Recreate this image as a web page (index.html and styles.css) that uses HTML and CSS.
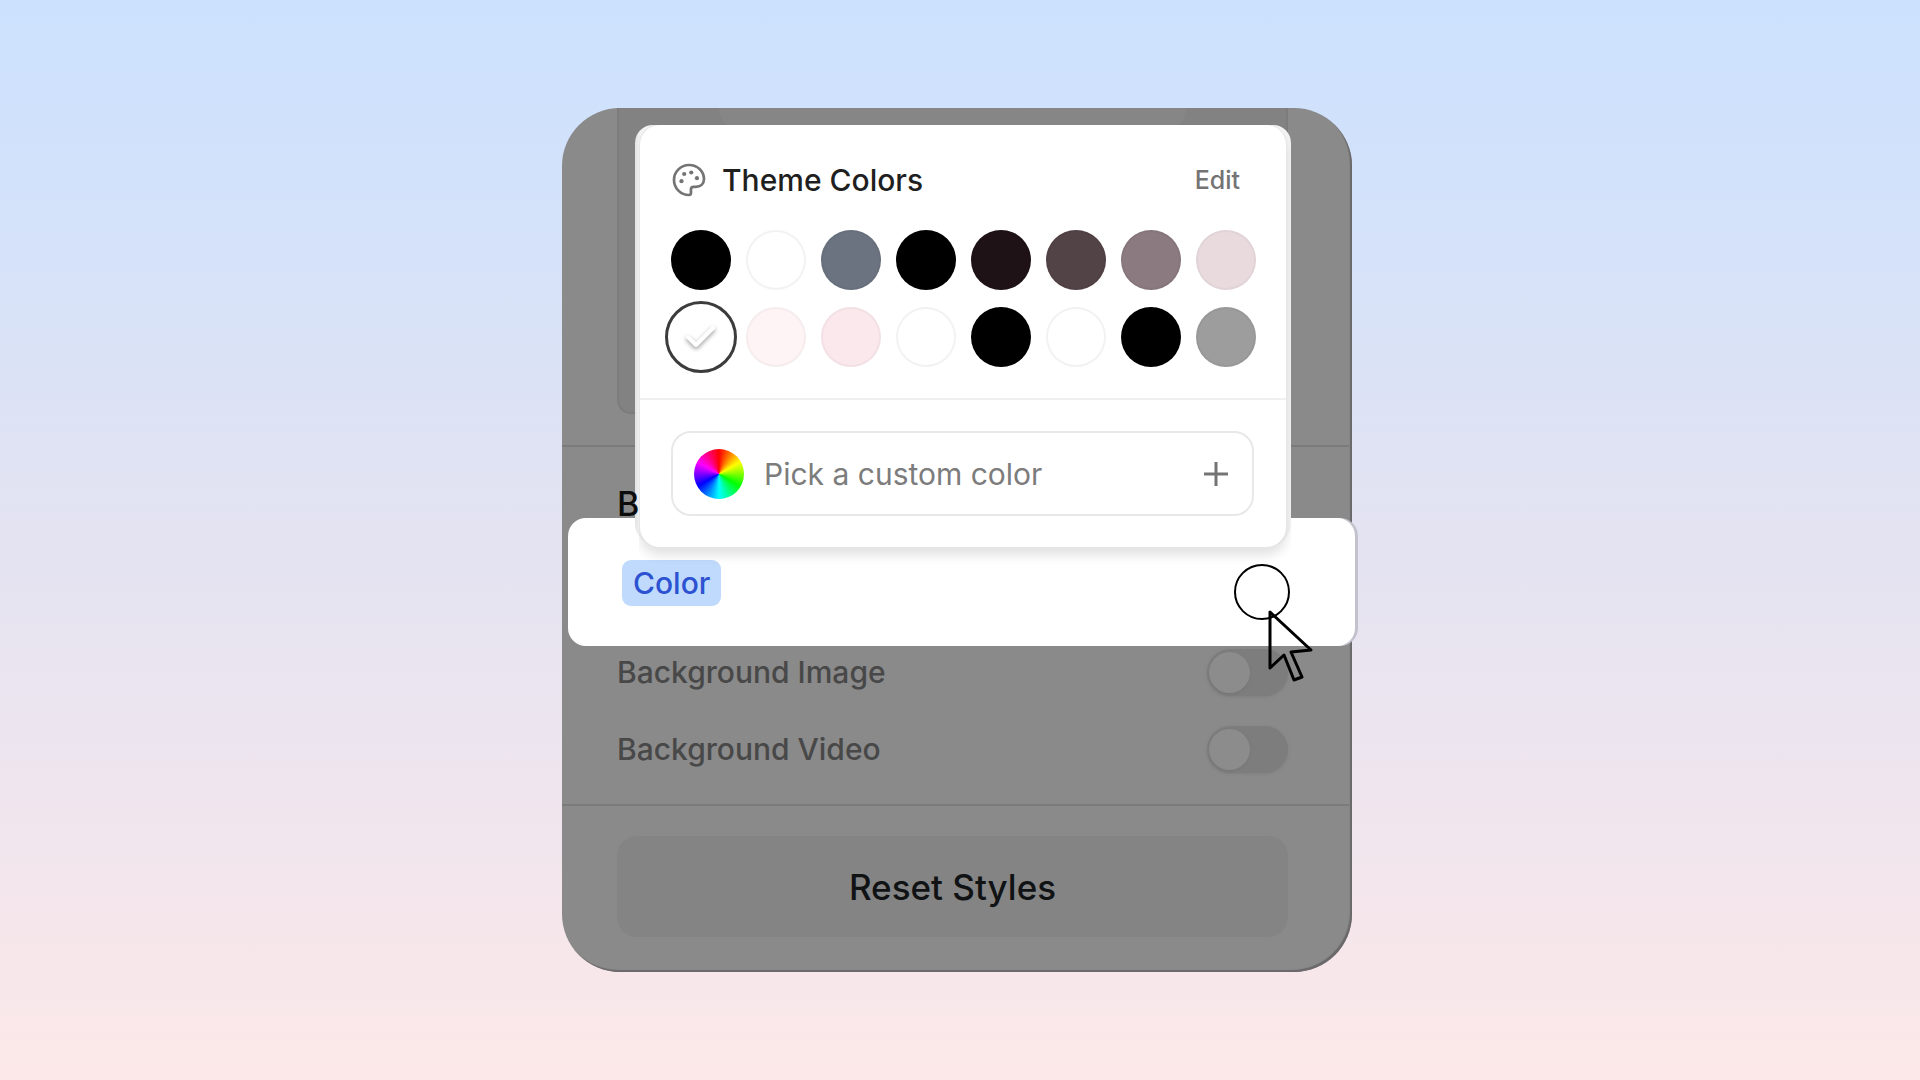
FILE: index.html
```html
<!DOCTYPE html>
<html lang="en">
<head>
    <meta charset="UTF-8">
    <meta name="viewport" content="width=device-width, initial-scale=1">
    <title>Theme Colors</title>
    <link rel="stylesheet" href="styles.css">
</head>
<body>
    <main class="panel">
        <div class="preview">
            <div class="preview-shape"></div>
        </div>

        <section class="background">
            <h2>B</h2>

            <div class="color-row">
                <label class="color-label" for="bg-color">Color</label>
                <button class="color-dot" id="bg-color" type="button"></button>
                <svg class="cursor" viewBox="0 0 48 76" fill="none" stroke="#000" stroke-width="3" stroke-linejoin="round">
                    <path d="M3 3v56l14-13 10 25 8-3-11-25 20-2z"/>
                </svg>
            </div>

            <div class="options">
                <div class="option">
                    <label for="bg-image">Background Image</label>
                    <input class="toggle" type="checkbox" id="bg-image">
                </div>
                <div class="option">
                    <label for="bg-video">Background Video</label>
                    <input class="toggle" type="checkbox" id="bg-video">
                </div>
            </div>
        </section>

        <div class="footer">
            <button class="reset" type="button">Reset Styles</button>
        </div>

        <div class="spotlight">
            <div class="popup">
                <div class="theme">
                    <div class="theme-header">
                        <svg class="palette" viewBox="0 0 24 24" fill="none" stroke="#747474" stroke-width="1.8" stroke-linejoin="round">
                            <path d="M12 2C6.500 2 2 6.500 2 12s4.500 10 10 10c.8 0 1.300-.5 1.300-1.300v-2.400c0-1 .7-1.700 1.700-1.700h1.500c3.200 0 5.500-2 5.500-5.200C22 6 17.500 2 12 2z"/>
                            <g fill="#747474" stroke="none">
                                <circle cx="7" cy="12.800" r="1.400"/>
                                <circle cx="8.800" cy="8" r="1.400"/>
                                <circle cx="13.500" cy="7" r="1.400"/>
                                <circle cx="17.300" cy="10.800" r="1.400"/>
                            </g>
                        </svg>
                        <h3>Theme Colors</h3>
                        <button class="edit" type="button">Edit</button>
                    </div>
                    <div class="swatches">
                        <button class="swatch black" type="button" aria-label="Black"></button>
                        <button class="swatch white" type="button" aria-label="White"></button>
                        <button class="swatch slate" type="button" aria-label="Slate"></button>
                        <button class="swatch black" type="button" aria-label="Black"></button>
                        <button class="swatch plum" type="button" aria-label="Plum"></button>
                        <button class="swatch mauve-dark" type="button" aria-label="Dark mauve"></button>
                        <button class="swatch mauve" type="button" aria-label="Mauve"></button>
                        <button class="swatch blush" type="button" aria-label="Blush"></button>
                        <button class="swatch white selected" type="button" aria-label="White, selected">
                            <svg class="check" viewBox="0 0 36 36" fill="none" stroke="#fff" stroke-width="4" stroke-linecap="round" stroke-linejoin="round">
                                <path d="M5 18l8 8L30 9"/>
                            </svg>
                        </button>
                        <button class="swatch rose-light" type="button" aria-label="Light rose"></button>
                        <button class="swatch rose" type="button" aria-label="Rose"></button>
                        <button class="swatch white" type="button" aria-label="White"></button>
                        <button class="swatch black" type="button" aria-label="Black"></button>
                        <button class="swatch white" type="button" aria-label="White"></button>
                        <button class="swatch black" type="button" aria-label="Black"></button>
                        <button class="swatch gray" type="button" aria-label="Gray"></button>
                    </div>
                </div>
                <div class="custom">
                    <button class="picker" type="button">
                        <span class="wheel"></span>
                        <span class="picker-text">Pick a custom color</span>
                        <svg class="plus" viewBox="0 0 24 24" stroke="#747474" stroke-width="3">
                            <path d="M12 0v24M0 12h24"/>
                        </svg>
                    </button>
                </div>
            </div>
        </div>
    </main>
</body>
</html>
```
FILE: styles.css
```css
* {
    margin: 0;
    padding: 0;
    box-sizing: border-box;
}

body {
    font-family: Inter, "Liberation Sans", sans-serif;
    font-size: 30px;
    font-weight: 500;
    min-height: 100vh;
    display: flex;
    justify-content: center;
    align-items: center;
    padding-right: 6px;
    background: linear-gradient(#cce1fe 0%, #d5e2f9 23%, #e2e3f2 47%, #efe5ee 74%, #fce8e8 100%);
}

button {
    font: inherit;
    border: none;
    cursor: pointer;
}

/* panel */

.panel {
    position: relative;
    width: 100%;
    max-width: 790px;
    background: #8a8a8a;
    border-radius: 58px;
    box-shadow: inset -2px -2px 1px #6b686b;
}

.preview {
    height: 306px;
    margin: 0 64px 31px 55px;
    background: #828282;
    border: 2px solid #7c7c7c;
    border-top: none;
    border-radius: 0 0 14px 14px;
}

.preview-shape {
    width: 70%;
    height: 24px;
    margin: 0 auto;
    background: #868686;
    border-radius: 0 0 60px 60px;
}

.background {
    border-top: 2px solid #7b7b7b;
    border-bottom: 2px solid #7b7b7b;
    margin-right: 3px;
}

h2 {
    position: relative;
    z-index: 1;
    height: 71px;
    padding: 35px 0 0 55px;
    font-size: 34px;
    line-height: 44px;
    font-weight: 500;
    color: #0c0c0c;
}

.color-row {
    position: relative;
    display: flex;
    justify-content: space-between;
    align-items: center;
    height: 128px;
    margin: 0 -6px 0 6px;
    padding: 20px 65px 0 54px;
    background: #fff;
    border-radius: 18px;
    box-shadow: 3px 0 0 #c3c1cb;
}

.color-label {
    padding: 0 11px;
    margin-bottom: 18px;
    line-height: 46px;
    color: #2c52d2;
    background: #bfdafc;
    border-radius: 9px;
}

.color-dot {
    width: 56px;
    height: 56px;
    background: #fff;
    border: 2px solid #000;
    border-radius: 50%;
}

.cursor {
    position: absolute;
    right: 40px;
    top: 91px;
    width: 48px;
    height: 76px;
    z-index: 3;
}

.options {
    display: flex;
    flex-direction: column;
    gap: 30px;
    padding: 3px 61px 31px 55px;
}

.option {
    display: flex;
    justify-content: space-between;
    align-items: center;
    line-height: 47px;
    color: #484848;
}

.toggle {
    appearance: none;
    width: 81px;
    height: 47px;
    padding: 3px 2px;
    background: #7d7d7d;
    border-radius: 24px;
    box-shadow: 0 1px 3px #7f7f7f;
    cursor: pointer;
}

.toggle::before {
    content: "";
    display: block;
    width: 41px;
    height: 41px;
    border-radius: 50%;
    background: #8c8c8c;
    box-shadow: 0 1px 3px #757575;
}

.footer {
    padding: 30px 64px 35px 55px;
}

.reset {
    width: 100%;
    height: 101px;
    font-size: 35px;
    color: #101214;
    background: #848484;
    border-radius: 20px;
}

/* color popup, laid over the panel */

.spotlight {
    position: absolute;
    top: 17px;
    left: 73px;
    right: 61px;
    padding: 0 5px;
    background: linear-gradient(to right, #e2e2e2, #f4f4f4 5px, #f4f4f4);
    border-radius: 18px 18px 24px 24px;
}

.popup {
    position: relative;
    z-index: 2;
    background: #fff;
    border-radius: 20px;
    box-shadow: 0 0 0 1px #e6e6e6, 0 8px 12px rgba(0, 0, 0, 0.12);
    clip-path: inset(0 -5px -30px -1px);
}

.theme {
    padding: 34px 30px 31px 31px;
    border-bottom: 2px solid #f0f0f0;
}

.theme-header {
    display: flex;
    align-items: center;
    height: 42px;
    margin-bottom: 29px;
}

.palette {
    width: 36px;
    height: 36px;
    margin-right: 15px;
}

h3 {
    font-size: 30px;
    font-weight: 500;
    color: #1f1f1f;
}

.edit {
    margin: 0 16px 0 auto;
    font-size: 25px;
    color: #747474;
    background: none;
}

.swatches {
    display: grid;
    grid-template-columns: repeat(8, 60px);
    justify-content: space-between;
    row-gap: 17px;
}

.swatch {
    height: 60px;
    border: 2px solid rgba(0, 0, 0, 0.03);
    border-radius: 50%;
}

.selected {
    display: flex;
    justify-content: center;
    align-items: center;
    border-color: #fff;
    outline: 3px solid #3c3c3c;
    outline-offset: 3px;
}

.check {
    width: 36px;
    height: 36px;
    filter: drop-shadow(0 2px 2px rgba(0, 0, 0, 0.4));
}

.black { background-color: #000; }
.white { background-color: #fff; border-color: rgba(0, 0, 0, 0.05); }
.white.selected { border-color: #fff; }
.slate { background-color: #6b7280; }
.plum { background-color: #1f1216; }
.mauve-dark { background-color: #524347; }
.mauve { background-color: #8b7a80; }
.blush { background-color: #e9dade; }
.rose-light { background-color: #fef4f6; }
.rose { background-color: #fae8ed; }
.gray { background-color: #9d9d9d; }

.custom {
    padding: 31px 32px 31px 31px;
}

.picker {
    display: flex;
    align-items: center;
    width: 100%;
    height: 85px;
    padding: 0 24px 0 21px;
    background: #fff;
    border: 2px solid #e8e8e8;
    border-radius: 20px;
}

.wheel {
    width: 50px;
    height: 50px;
    margin-right: 20px;
    border-radius: 50%;
    background: conic-gradient(#f00, #ff0, #0f0, #0ff, #00f, #f0f, #f00);
}

.picker-text {
    font-weight: 400;
    color: #7c7c7c;
}

.plus {
    width: 24px;
    height: 24px;
    margin-left: auto;
}
```
